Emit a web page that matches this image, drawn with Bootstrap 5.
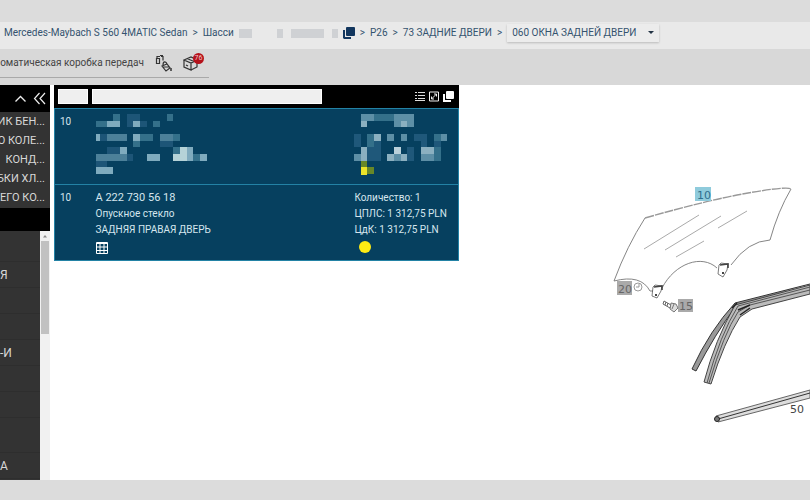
<!DOCTYPE html>
<html lang="ru">
<head>
<meta charset="utf-8">
<meta name="viewport" content="width=device-width, initial-scale=1">
<title>060 ОКНА ЗАДНЕЙ ДВЕРИ</title>
<link href="https://cdn.jsdelivr.net/npm/bootstrap@5.3.0/dist/css/bootstrap.min.css" rel="stylesheet">
<style>
body{font-family:Roboto,"Liberation Sans",sans-serif;font-size:10px;line-height:16px;background:#dcdcdc;color:#222}
a{color:inherit;text-decoration:none}
button{border:0;background:none;padding:0;color:inherit;line-height:0}
.shell{padding:22px 0 20px}
.trail{background:#e9e9e9;color:#34536f;min-height:27px;padding:0 4px 5px;white-space:nowrap}
.trail ol{gap:5px}
.blur{height:9px;background:#cfd1d4}
.blur.s{width:13px}.blur.t{width:6px}.blur.l{width:33px}
.pick{appearance:none;border:0;box-shadow:0 1px 2px #bbb;background:#ececec url("data:image/svg+xml,%3Csvg xmlns='http://www.w3.org/2000/svg' viewBox='0 0 6 4'%3E%3Cpath d='M0 0h6L3 3z' fill='%23234'/%3E%3C/svg%3E") no-repeat right 5px center/6px 4px;color:#34536f;font-size:10px;line-height:16px;height:18px;width:152px;padding:0 5px}
.tools{min-height:36px;background:#d8d8d8}
.toolset{width:209px;height:29px;border-bottom:1px solid #a9a9a9;gap:11px;color:#444;white-space:nowrap}
.toolset .label{width:144px}
.count{position:absolute;top:-2px;right:-6px;width:11px;height:11px;border-radius:50%;background:#b5121b;color:#f0c9c9;font-size:7px;line-height:11px;text-align:center}
.side{width:50px;background:#000;color:#d8d8d8;white-space:nowrap;overflow:hidden}
.side .heads{height:27px;gap:6px;padding-right:4px;color:#eee}
.recent{background:#333;height:96px;font-size:11px;line-height:19px}
.recent a{display:flex;justify-content:flex-end;padding-right:5px}
.tree{background:#333;margin-top:23px}
.tree .rows{padding-top:5px}
.tree a{display:block;height:26px;line-height:26px;font-size:12px;border-bottom:1px solid #2e2e2e}
.tree a.tall{height:35px;line-height:35px}
.scroller{width:10px;background:#f1f1f1;color:#777}
.thumb{height:93px;background:#c1c1c1;margin:0 1px}
.parts{width:50%}
.finder{background:#000;height:23px;padding:0 5px 0 4px;gap:4px}
.finder input{background:#efefef;border:1px solid #fff;height:15px;min-width:0}
.code{width:30px}.words{width:230px}
.list{width:100%;table-layout:fixed;background:#06405f;color:#d5e6ee;border:1px solid #2382a5}
.list td{height:76px;padding:5px 0 0 5px;vertical-align:top;border-top:1px solid #2382a5}
.list td svg{display:block}
.list .n{width:36px}.list .p{width:27%}
.list .part{font-size:11px}
.dot{width:12px;height:12px;border-radius:50%;background:#ffeb14;margin:3px 0 0 5px}
.drawing text{font-family:"DejaVu Sans",sans-serif;font-size:11px}
</style>
</head>
<body>
<div class="shell d-flex flex-column min-vh-100">
<nav class="trail d-flex align-items-center" aria-label="Путь">
<ol class="list-unstyled d-flex align-items-center mb-0">
<li><a href="#">Mercedes-Maybach S 560 4MATIC Sedan</a></li><li>&gt;</li>
<li><a href="#">Шасси</a></li>
<li class="blur s me-3"></li><li class="d-flex gap-2 ms-1"><span class="blur t"></span><span class="blur l"></span><span class="blur t"></span></li>
<li><button aria-label="Копировать"><svg width="12" height="12" viewBox="0 0 12 12"><path d="M0 3h2v7h6v2H1l-1-1z" fill="#12365e"/><rect x="3" width="9" height="9" rx="1" fill="#12365e"/></svg></button></li>
<li>&gt;</li><li><a href="#">P26</a></li><li>&gt;</li>
<li><a href="#">73 ЗАДНИЕ ДВЕРИ</a></li><li>&gt;</li>
<li><select class="pick" aria-label="Подгруппа"><option>060 ОКНА ЗАДНЕЙ ДВЕРИ</option></select></li>
</ol>
</nav>
<div class="tools">
<div class="toolset d-flex align-items-center">
<span class="label d-flex justify-content-end overflow-hidden">оматическая коробка передач</span>
<button aria-label="Краска и жидкости"><svg width="17" height="17" viewBox="0 0 17 17" fill="none" stroke="#333"><path d="M1.500 3.500h3v5h-3zM2 3V1.500h3M6 1.500h2v4M5 .5h3" stroke-width="1.200"/><path d="m7 11 5-2 3 4-4 3zM8 10c0-4 3-4 4-1M8 12h6" stroke-width="1.200"/><path d="M16 13v3" stroke-width="1.500"/></svg></button>
<button class="position-relative" aria-label="Корзина"><svg width="15" height="16" viewBox="0 0 15 16" fill="none" stroke="#333" stroke-width="1.200"><path d="m1 5 7-3 6 3-6 3zM1 5v7l7 3V8m0 7 6-3V5M4 3.500l7 3M3 10l2 1"/></svg><span class="count">76</span></button>
</div>
</div>
<main class="d-flex flex-grow-1 bg-white">
<aside class="side d-flex flex-column flex-shrink-0">
<div class="heads d-flex align-items-center justify-content-end">
<button aria-label="Свернуть"><svg width="13" height="12" viewBox="0 0 13 12" fill="none" stroke="#eee" stroke-width="1.300"><path d="m1.500 8.500 5-5 5 5"/></svg></button>
<button aria-label="Скрыть панель"><svg width="13" height="13" viewBox="0 0 13 13" fill="none" stroke="#eee" stroke-width="1.200"><path d="m6.500 1-5 5.500 5 5.500M12 1 7 6.500l5 5.500"/></svg></button>
</div>
<div class="recent"><a href="#">ИК БЕН...</a><a href="#">О КОЛЕ...</a><a href="#">КОНД...</a><a href="#">БКИ ХЛ...</a><a href="#">ЕГО КО...</a></div>
<div class="tree d-flex flex-grow-1">
<div class="rows flex-grow-1"><a href="#"></a><a href="#">Я</a><a href="#"></a><a href="#"></a><a href="#">-И</a><a href="#"></a><a href="#"></a><a class="tall" href="#"></a><a href="#">А</a></div>
<div class="scroller"><svg class="d-block" width="10" height="10" viewBox="0 0 10 10"><path d="M3 6.500h4L5 4z" fill="#888"/></svg><div class="thumb"></div></div>
</div>
</aside>
<section class="parts flex-shrink-0 ms-1">
<div class="finder d-flex align-items-center">
<input class="code" aria-label="Позиция"><input class="words" aria-label="Поиск">
<div class="d-flex ms-auto gap-1">
<button aria-label="Список"><svg width="10" height="11" viewBox="0 0 10 11" stroke="#ddd"><path d="M0 1.500h2m1 0h7M0 4.500h2m1 0h7M0 7.500h2m1 0h7M0 9.500h10"/></svg></button>
<button aria-label="Развернуть"><svg width="10" height="11" viewBox="0 0 10 11" fill="none" stroke="#eee"><path d="M.5 1h9v9h-9zM2.500 8l5-5M5 3h2.500v2.500M2.500 5.500V8H5"/></svg></button>
<button aria-label="Копировать список"><svg width="11" height="11" viewBox="0 0 11 11" fill="#fff"><path d="M0 3h2v6h6v2H0z"/><rect x="3" width="8" height="8" rx="1"/></svg></button>
</div>
</div>
<table class="list">
<colgroup><col class="n"><col><col class="p"></colgroup>
<tbody>
<tr><td class="n">10</td><td>
<svg width="120" height="62" viewBox=".4 0 18 9.300" shape-rendering="crispEdges" aria-label="Скрытые данные">
<path fill="#1d5577" d="M5 0h2v1H5zM5 1h1v1H5zM7 1h1v1H7zM1 3h1v1H1zM10 4h2v1h-2zM2 5h2v1H2zM0 7h2v1H0zM5 6h1v1H5z"/>
<path fill="#34708a" d="M3 0h1v1H3zM11 0h1v1h-1zM0 1h2v1H0zM9 1h1v1H9zM7 3h2v1H7zM12 3h1v1h-1zM6 4h1v1H6zM12 5h1v1h-1zM15 6h1v1h-1z"/>
<path fill="#4c8099" d="M2 3h3v1H2zM10 3h2v1h-2zM0 6h5v1H0z"/>
<path fill="#7fabbe" d="M2 1h2v1H2zM6 1h1v1H6zM0 3h1v1H0zM6 3h1v1H6zM4 5h1v1H4zM8 6h2v1H8zM14 5h1v2h-1zM16 6h1v1h-1zM0 8h3v1H0z"/>
<path fill="#b5d3d8" d="M13 5h1v1h-1zM12 6h2v1h-2z"/></svg>
</td><td>
<svg width="100" height="62" viewBox="0 0 15 9.300" shape-rendering="crispEdges" aria-label="Скрытая цена">
<path fill="#1f587a" d="M0 3h1v2H0zM3 4h1v3H3zM9 3h2v1H9zM10 4h1v1h-1zM12 4h1v2h-1zM8 5h1v2H8zM2 5h1v2H2z"/>
<path fill="#34708a" d="M3 0h3v1H3zM2 3h1v2H2zM12 3h1v1h-1zM12 5h1v2h-1z"/>
<path fill="#5d8fa6" d="M1 0h2v1H1zM6 0h3v1H6zM6 1h1v1H6zM8 1h1v1H8zM5 3h1v1H5zM7 3h1v1H7zM13 3h1v1h-1zM0 6h1v1H0zM6 6h1v1H6zM10 6h2v1h-2z"/>
<path fill="#8bb0c0" d="M1 1h1v1H1zM7 1h1v1H7zM3 3h1v1H3zM1 5h1v2H1zM5 6h1v1H5zM7 6h1v1H7zM10 5h2v1h-2z"/>
<path fill="#b9d0da" d="M6 5h1v1H6z"/>
<path fill="#668728" d="M1 7h1v1H1zM2 8h1v1H2z"/><path fill="#eae32a" d="M1 8h1v1.200H1z"/></svg>
</td></tr>
<tr><td class="n">10</td><td><div class="part">A 222 730 56 18</div><div>Опускное стекло</div><div>ЗАДНЯЯ ПРАВАЯ ДВЕРЬ</div>
<button class="mt-1" aria-label="Таблица"><svg width="12" height="12" viewBox="0 0 12 12" fill="none" stroke="#fff"><path d="M.5.5h11v11H.5zM.5 1.500h11M.5 5h11M.5 8.500h11M4 1v10M8 1v10"/></svg></button></td>
<td><div>Количество: 1</div><div>ЦПЛС: 1 312,75 PLN</div><div>ЦдК: 1 312,75 PLN</div><div class="dot"></div></td></tr>
</tbody></table>
</section>
<section class="flex-grow-1 d-flex justify-content-end overflow-hidden">
<svg class="drawing flex-shrink-0" width="210" height="395" viewBox="600 85 210 395" fill="none" stroke="#777">
<path d="M645 218Q627 246 614 281M791 189Q778 211 770 240Q748 241 731 265M717 268C702 254 675 263 662 288M614 281Q641 274 650 291H653" stroke-width=".9"/>
<path d="M645 218Q708 200 748 193T791 189" stroke="#999" stroke-width="1.400" stroke-dasharray="9 1"/>
<path d="m644 249 55-34M665 250l56-34M676 257l28-16M718 228l29-17" stroke="#aaa"/>
<g stroke="#444"><path d="m653 287-1 9 5 2 4-7 1-5-7-1zM719 265l-1 9 5 3 4-7 1-6-7-1z" stroke-width=".7"/><path d="m654 287 8-1v4M720 265l8-1v4" stroke-width="1.600"/><path d="M655 295h2M722 273h2" stroke-width="2"/></g>
<rect x="695" y="187" width="16" height="14" fill="#8fcbdc" stroke="none"/><text x="697" y="199" fill="#2f6f8e" stroke="none">10</text>
<rect x="617" y="281" width="15" height="14" fill="#aaa" stroke="none"/><text x="618" y="293" fill="#666" stroke="none">20</text>
<rect x="678" y="299" width="15" height="13" fill="#aaa" stroke="none"/><text x="679" y="310" fill="#666" stroke="none">15</text>
<circle cx="638" cy="287" r="4" stroke="#999"/><path d="M636 287h3v-3" stroke="#999"/>
<path d="m664 301 7 4-1 3-7-4zM666 302l-1 3M668 303l-1 3" stroke="#666"/><path d="m671 303 5 1 2 4-4 4-4-3zM674 304l-2 5" stroke="#777" fill="#ddd"/>
<path d="M810 284 735 303Q710 330 692 369L696 371Q715 334 736 306" fill="#999" stroke="#333"/>
<path d="M735 305Q715 340 704 382L711 384Q724 342 740 317L752 309 810 294V285Z" fill="#bbb" stroke="#444"/>
<path d="M810 287 738 306Q720 335 707 383M810 290 750 305 738 312Q724 333 709 383" stroke="#555"/>
<path d="M732 308 737 303M738 310l12-5M740 315l10-7" stroke="#222" stroke-width="1.500"/>
<path d="M810 390 716 416 718 422 810 398z" fill="#ddd" stroke="#666"/><path d="m810 393-92 26" stroke="#333"/><circle cx="717" cy="419" r="2.500" fill="#777" stroke="#222"/>
<text x="790" y="413" fill="#444" stroke="none">50</text>
</svg>
</section>
</main>
</div>
<script src="https://cdn.jsdelivr.net/npm/bootstrap@5.3.0/dist/js/bootstrap.bundle.min.js"></script>
</body>
</html>
